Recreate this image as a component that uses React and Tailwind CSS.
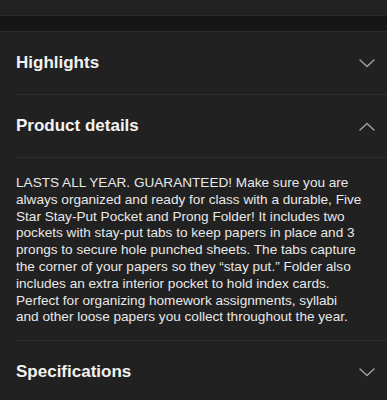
import React from 'react';

const Chevron = ({ up }) => (
  <svg width="16" height="9" viewBox="0 0 16 9" fill="none" className="shrink-0">
    <path
      d={up ? 'M1 8 L8 1.5 L15 8' : 'M1 1 L8 7.5 L15 1'}
      stroke="#a3a3a3"
      strokeWidth="1.4"
      strokeLinecap="round"
      strokeLinejoin="round"
    />
  </svg>
);

const Header = ({ title, open }) => (
  <div className="flex items-center justify-between h-[62px] pl-4 pr-[12px]">
    <span className="text-[17px] font-bold text-[#f2f2f2]">{title}</span>
    <Chevron up={open} />
  </div>
);

const lines = [
  'LASTS ALL YEAR. GUARANTEED! Make sure you are',
  'always organized and ready for class with a durable, Five',
  'Star Stay-Put Pocket and Prong Folder! It includes two',
  'pockets with stay-put tabs to keep papers in place and 3',
  'prongs to secure hole punched sheets. The tabs capture',
  'the corner of your papers so they “stay put.” Folder also',
  'includes an extra interior pocket to hold index cards.',
  'Perfect for organizing homework assignments, syllabi',
  'and other loose papers you collect throughout the year.',
];

export default function App() {
  return (
    <div className="w-[387px] h-[400px] overflow-hidden bg-[#212121]" style={{ fontFamily: '"Liberation Sans", Arial, sans-serif' }}>
      <div className="h-[16px] bg-[#222222] border-b border-[#2b2b2b]" />
      <div className="h-[16px] bg-[#161616] border-b border-[#2b2b2b]" />
      <Header title="Highlights" />
      <div className="ml-4 h-px bg-[#2e2e2e]" />
      <Header title="Product details" open />
      <div className="ml-4 h-px bg-[#2e2e2e]" />
      <div className="pl-4 pr-2 pt-[17px] pb-[14px]">
        <p className="text-[13.6px] leading-[16.8px] text-[#e8e8e8]">
          {lines.map((l) => (
            <span key={l} className="block whitespace-nowrap">{l}</span>
          ))}
        </p>
      </div>
      <div className="ml-4 h-px bg-[#2e2e2e]" />
      <Header title="Specifications" />
    </div>
  );
}
